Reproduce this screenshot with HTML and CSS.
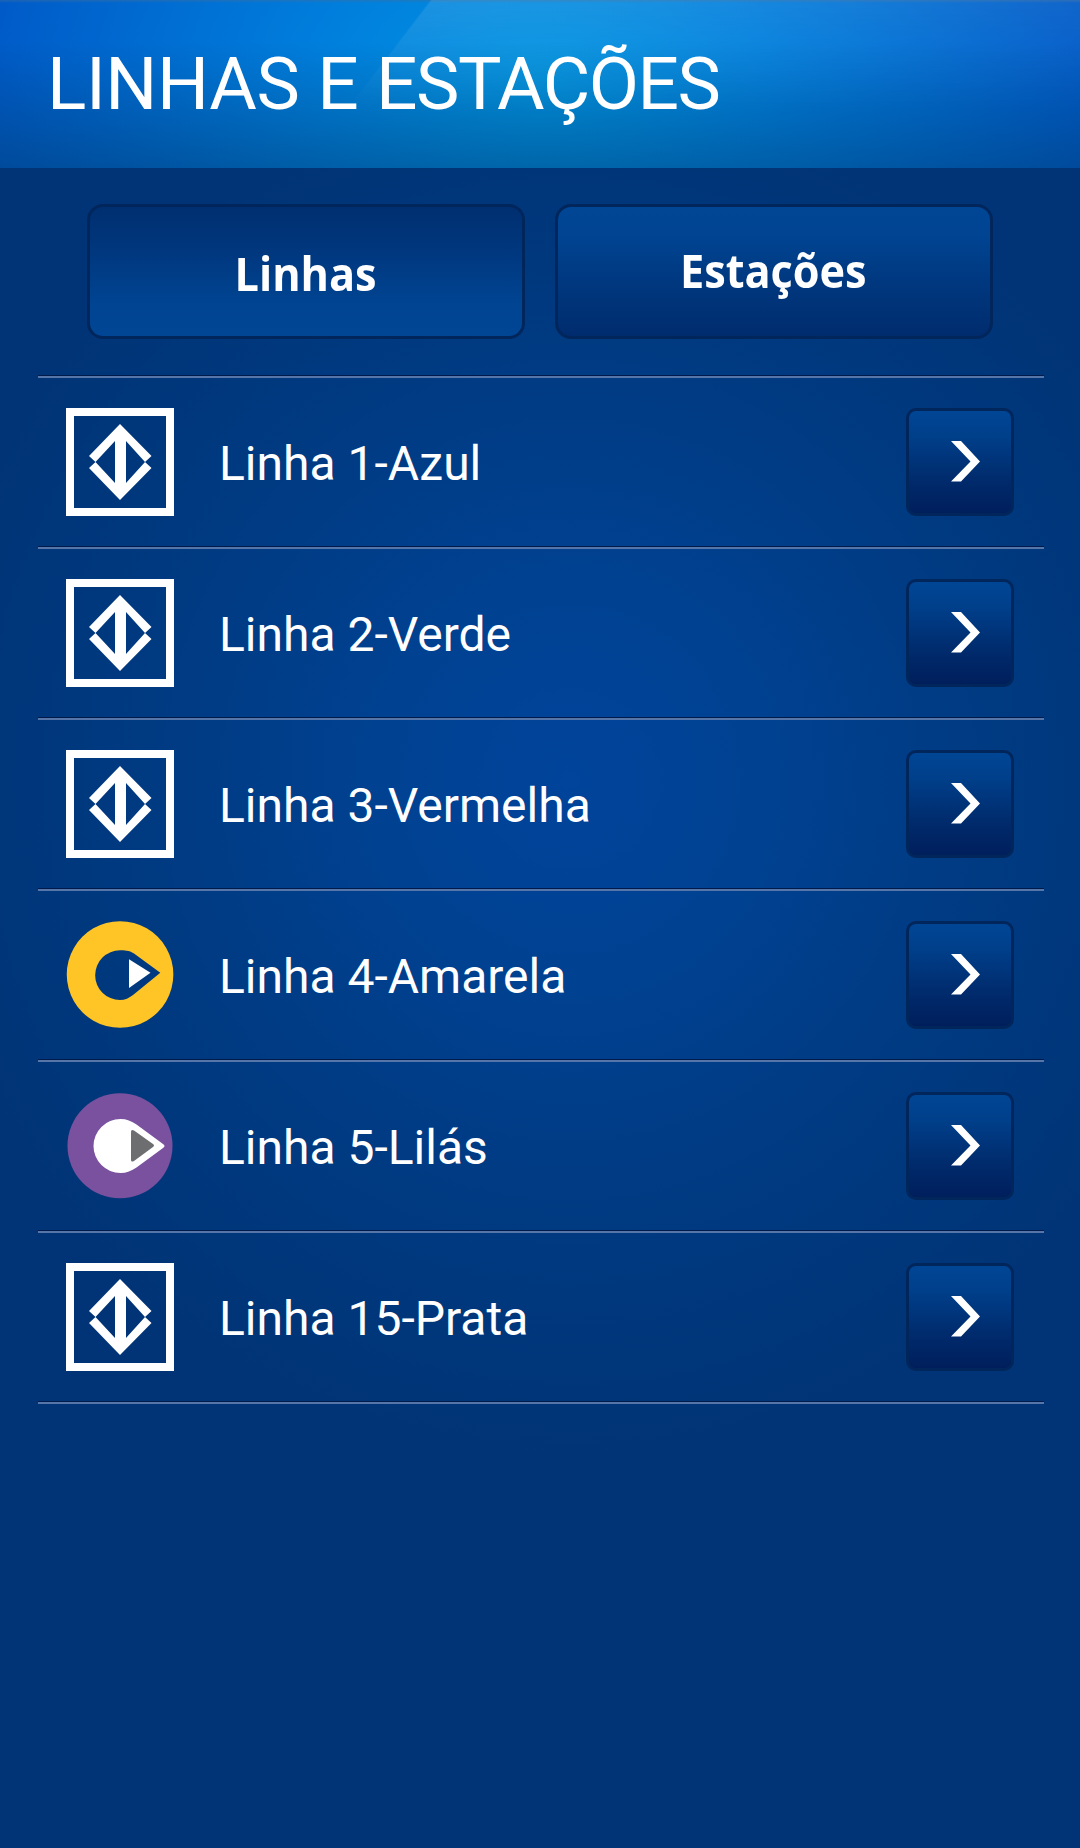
FILE: index.html
```html
<!DOCTYPE html>
<html lang="pt-BR">
<head>
  <meta charset="UTF-8">
  <title>Linhas e Estações</title>
  <link rel="stylesheet" href="styles.css">
</head>
<body>
  <svg class="defs" aria-hidden="true">
    <symbol id="metro" viewBox="0 0 108 108">
      <path fill="#fff" fill-rule="evenodd" d="M0 0h108v108H0zM8 8v92h92V8z"/>
      <path fill="#fff" fill-rule="evenodd" d="M54 16l31.500 32-6.500 6 6.500 6L54 92 23 60l6.500-6-6.500-6zM49 33L29.500 54 49 75zM60 33l19 21-19 21z"/>
    </symbol>
    <symbol id="amarela" viewBox="0 0 108 108">
      <path fill="#ffc425" fill-rule="evenodd" d="M54 .2a53.300 53.300 0 1 0 .1 0zM94.300 51.700L68 32.500C63 29.300 58 29.300 54 29.300A24.800 24.800 0 0 0 54 79C59 79 63 77 67 74z"/>
      <path fill="#fff" d="M63 38.300l21.500 13.400L63 67z"/>
    </symbol>
    <symbol id="lilas" viewBox="0 0 108 108">
      <circle cx="54" cy="53.800" r="52.500" fill="#7a519e"/>
      <path fill="#fff" d="M54.500 27c6 0 11 2 16 5.500l26.500 19.500q3 2 0 4L70.500 75.500c-5 3.500-10 5.500-16 5.500a27 27 0 0 1 0-54z"/>
      <path fill="#6d6e70" d="M65 40q0-3 3-1.500l19 13.500q2 1.500 0 3l-19 14q-3 1.500-3-1z"/>
    </symbol>
    <symbol id="seta" viewBox="0 0 108 108">
      <path fill="#fff" d="M45 33h10l19 20.500L55 73.500H45l19.500-20z"/>
    </symbol>
  </svg>

  <header class="header">
    <h1 class="title">LINHAS E <span class="tight">ESTAÇÕES</span></h1>
  </header>

  <nav class="tabs">
    <button class="tab active"><span class="label">Linhas</span></button>
    <button class="tab"><span class="label">Estações</span></button>
  </nav>

  <ul class="lines">
    <li class="line">
      <svg class="logo"><use href="#metro"/></svg>
      <span class="name">Linha 1-Azul</span>
      <button class="go"><svg class="arrow"><use href="#seta"/></svg></button>
    </li>
    <li class="line">
      <svg class="logo"><use href="#metro"/></svg>
      <span class="name">Linha 2-Verde</span>
      <button class="go"><svg class="arrow"><use href="#seta"/></svg></button>
    </li>
    <li class="line">
      <svg class="logo"><use href="#metro"/></svg>
      <span class="name">Linha 3-Vermelha</span>
      <button class="go"><svg class="arrow"><use href="#seta"/></svg></button>
    </li>
    <li class="line">
      <svg class="logo"><use href="#amarela"/></svg>
      <span class="name">Linha 4-Amarela</span>
      <button class="go"><svg class="arrow"><use href="#seta"/></svg></button>
    </li>
    <li class="line">
      <svg class="logo"><use href="#lilas"/></svg>
      <span class="name">Linha 5-Lilás</span>
      <button class="go"><svg class="arrow"><use href="#seta"/></svg></button>
    </li>
    <li class="line">
      <svg class="logo"><use href="#metro"/></svg>
      <span class="name">Linha 15-Prata</span>
      <button class="go"><svg class="arrow"><use href="#seta"/></svg></button>
    </li>
  </ul>
</body>
</html>
```
FILE: styles.css
```css
* {
  box-sizing: border-box;
}
body {
  margin: 0;
  min-height: 1848px;
  background: radial-gradient(660px 680px at 570px 780px, #00449b 0%, #004191 30%, #003a81 65%, #003476 100%);
  color: #fff;
  font-family: Roboto, sans-serif;
}
.defs {
  display: none;
}
.header {
  position: relative;
  height: 168px;
  padding: 41px 0 0 47px;
  background:
    linear-gradient(to bottom, rgba(60, 110, 160, 0.5) 0, rgba(60, 110, 160, 0) 3px),
    linear-gradient(to bottom, rgba(0, 50, 90, 0) 25%, rgba(0, 50, 90, 0.4) 100%),
    radial-gradient(640px 420px at 540px 80px, #0095e2 0%, #007fdd 35%, #0058c6 90%);
}
/* diagonal shine that fades out towards the bottom */
.header::before {
  content: "";
  position: absolute;
  inset: 0;
  background: linear-gradient(127.500deg, transparent 341px, rgba(255, 255, 255, 0.11) 343px, rgba(255, 255, 255, 0.06) 100%);
  -webkit-mask-image: linear-gradient(to bottom, #000, transparent 110px);
  mask-image: linear-gradient(to bottom, #000, transparent 110px);
}
.title {
  position: relative;
  margin: 0;
  font-size: 73px;
  font-weight: 400;
  line-height: 86px;
  letter-spacing: -0.4px;
  white-space: nowrap;
}
.tight {
  letter-spacing: -1.5px;
}
.tabs {
  display: flex;
  gap: 30px;
  padding: 36px 87px;
}
.tab {
  width: 438px;
  height: 135px;
  padding: 0 2px 4px 0;
  border: 3px solid #00265c;
  border-radius: 16px;
  background: linear-gradient(to bottom, #004695 0%, #004492 22%, #00367c 65%, #002c6e 100%);
  color: #fff;
  font-family: "Open Sans", sans-serif;
  font-size: 46px;
  font-weight: 700;
}
.tab.active {
  padding: 2px 0 0;
  background: linear-gradient(to bottom, #002f70 0%, #00367c 30%, #004492 75%, #004695 100%);
}
.label {
  display: inline-block;
  transform: scaleX(0.94);
}
.lines {
  margin: 0 36px 0 38px;
  padding: 0;
  list-style: none;
  box-shadow: 0 1px #001a4c, 0 3px #5675a8;
}
.line {
  display: flex;
  align-items: center;
  height: 171px;
  padding: 3px 30px 0 28px;
  box-shadow: inset 0 1px #001a4c, inset 0 3px #5675a8;
}
.logo {
  width: 108px;
  height: 108px;
}
.name {
  flex: 1;
  margin-left: 45px;
  padding-top: 2px;
  font-size: 48px;
}
.go {
  width: 108px;
  height: 108px;
  padding: 0;
  border: 3px solid #00265c;
  border-radius: 10px;
  background: linear-gradient(to bottom, #004695 0%, #003f8a 25%, #002c6e 65%, #001e5c 100%);
}
.arrow {
  display: block;
  width: 108px;
  height: 108px;
  margin: -3px;
}
```
